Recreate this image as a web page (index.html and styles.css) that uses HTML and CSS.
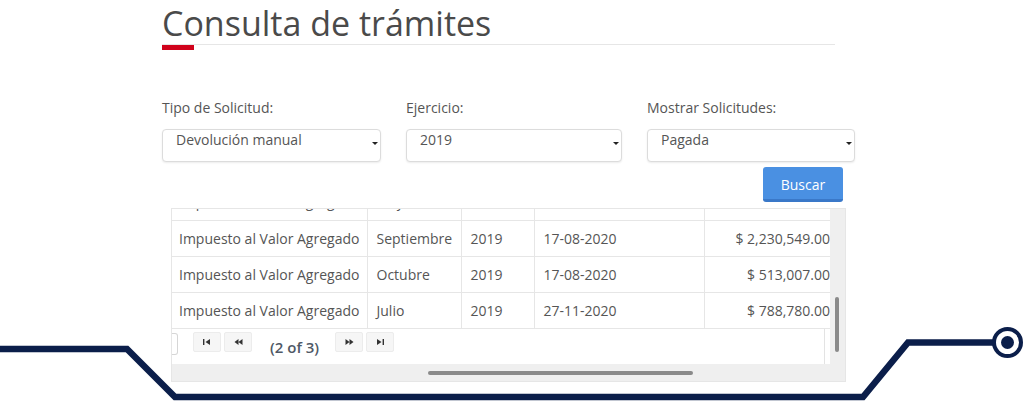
FILE: index.html
```html
<!DOCTYPE html>
<html lang="es">
<head>
<meta charset="utf-8">
<title>Consulta de trámites</title>
<link rel="stylesheet" href="styles.css">
</head>
<body>
<main class="page">
  <header class="page-head">
    <h1 class="title">Consulta de trámites</h1>
    <div class="accent"></div>
  </header>

  <section class="filters">
    <div class="field">
      <label class="field-label">Tipo de Solicitud:</label>
      <div class="select select-1"><span class="select-value">Devolución manual</span><i class="caret"></i></div>
    </div>
    <div class="field">
      <label class="field-label">Ejercicio:</label>
      <div class="select select-2"><span class="select-value">2019</span><i class="caret"></i></div>
    </div>
    <div class="field">
      <label class="field-label">Mostrar Solicitudes:</label>
      <div class="select select-3"><span class="select-value">Pagada</span><i class="caret"></i></div>
    </div>
  </section>

  <div class="actions"><button class="btn-search" type="button">Buscar</button></div>

  <div class="grid-box">
    <div class="viewport">
      <table class="data">
        <colgroup>
          <col class="c1"><col class="c2"><col class="c3"><col class="c4"><col class="c5">
        </colgroup>
        <tbody>
          <tr><td>Impuesto al Valor Agregado</td><td>Mayo</td><td>2019</td><td>17-08-2020</td><td class="num">$ 1,204,318.00</td></tr>
          <tr><td>Impuesto al Valor Agregado</td><td>Septiembre</td><td>2019</td><td>17-08-2020</td><td class="num">$ 2,230,549.00</td></tr>
          <tr><td>Impuesto al Valor Agregado</td><td>Octubre</td><td>2019</td><td>17-08-2020</td><td class="num">$ 513,007.00</td></tr>
          <tr><td>Impuesto al Valor Agregado</td><td>Julio</td><td>2019</td><td>27-11-2020</td><td class="num">$ 788,780.00</td></tr>
        </tbody>
      </table>
      <div class="pager">
        <span class="pg-size"></span>
        <button class="pg-btn pg-first" type="button" aria-label="Primera">
          <svg width="8" height="6" viewBox="0 0 8 6"><rect x="0" y="0" width="1.4" height="6" fill="#333"/><path d="M7 0 L2.5 3 L7 6 Z" fill="#333"/></svg>
        </button>
        <button class="pg-btn" type="button" aria-label="Anterior">
          <svg width="9" height="6" viewBox="0 0 9 6"><path d="M4.5 0 L0.5 3 L4.5 6 Z M8.5 0 L4.5 3 L8.5 6 Z" fill="#333"/></svg>
        </button>
        <span class="pg-text">(2 of 3)</span>
        <button class="pg-btn" type="button" aria-label="Siguiente">
          <svg width="9" height="6" viewBox="0 0 9 6"><path d="M0.5 0 L4.5 3 L0.5 6 Z M4.5 0 L8.5 3 L4.5 6 Z" fill="#333"/></svg>
        </button>
        <button class="pg-btn" type="button" aria-label="Última">
          <svg width="8" height="6" viewBox="0 0 8 6"><path d="M1 0 L5.5 3 L1 6 Z" fill="#333"/><rect x="6.6" y="0" width="1.4" height="6" fill="#333"/></svg>
        </button>
      </div>
    </div>
    <div class="vscroll"><div class="vthumb"></div></div>
    <div class="hscroll"><div class="hthumb"></div></div>
    <div class="corner"></div>
  </div>
</main>

<svg class="deco" width="1024" height="401" viewBox="0 0 1024 401" aria-hidden="true">
  <polyline points="-5,349 127,349 175,397 863,397 908,342.5 993,342.5" fill="none" stroke="#0b1e4a" stroke-width="6.5" stroke-linejoin="miter"/>
  <circle cx="1007.5" cy="342.5" r="13.5" fill="#fff" stroke="#0b1e4a" stroke-width="4"/>
  <circle cx="1007.5" cy="342.5" r="6.5" fill="#0b1e4a"/>
</svg>
</body>
</html>
```

FILE: styles.css
```css
* { box-sizing: border-box; }

html, body {
  margin: 0;
  padding: 0;
  background: #ffffff;
}

body {
  position: relative;
  width: 1024px;
  height: 401px;
  overflow: hidden;
  font-family: "Open Sans", "Liberation Sans", sans-serif;
  font-size: 14px;
  color: #555555;
}

.page {
  width: 693px;
  margin-left: 162px;
}

/* ---------- heading ---------- */
.page-head {
  display: flex;
  flex-direction: column;
}

.title {
  margin: 0;
  padding: 3px 0 1px 0;
  font-size: 34px;
  font-weight: 400;
  line-height: 40px;
  color: #4a4a4a;
  border-bottom: 1px solid #e6e6e6;
  width: 673px;
}

.accent {
  width: 32px;
  height: 5px;
  background: #d0021b;
}

/* ---------- filters ---------- */
.filters {
  display: grid;
  grid-template-columns: 219px 216px 208px;
  column-gap: 25px;
  margin-top: 48px;
}

.field {
  display: flex;
  flex-direction: column;
  gap: 11px;
}

.field-label {
  line-height: 20px;
  color: #555555;
}

.select {
  display: flex;
  justify-content: space-between;
  align-items: flex-start;
  height: 33px;
  padding: 0 2px 0 13px;
  border: 1px solid #dcdcdc;
  border-radius: 4px;
  box-shadow: 0 1px 2px rgba(0, 0, 0, 0.08);
  background: #fff;
}

.select-value {
  line-height: 20px;
  color: #555555;
}

.caret {
  width: 0;
  height: 0;
  margin-top: 12px;
  border-left: 3px solid transparent;
  border-right: 3px solid transparent;
  border-top: 3px solid #222;
}

/* ---------- action ---------- */
.actions {
  display: flex;
  justify-content: flex-end;
  padding-right: 12px;
  margin-top: 5px;
}

.btn-search {
  width: 80px;
  height: 35px;
  border: 0;
  border-bottom: 3px solid #3a78c8;
  border-radius: 3px;
  background: #4a90e2;
  color: #ffffff;
  font-family: "Open Sans", "Liberation Sans", sans-serif;
  font-size: 14px;
  padding: 2px 0 0 0;
}

/* ---------- data grid ---------- */
.grid-box {
  display: grid;
  grid-template-columns: 658px 15px;
  grid-template-rows: 155px 17px;
  width: 675px;
  margin-left: 9px;
  margin-top: 6px;
  border: 1px solid #e6e6e6;
  background: #fff;
}

.viewport {
  overflow: hidden;
  background: #fff;
}

.data {
  border-collapse: collapse;
  table-layout: fixed;
  width: 666px;
  margin-top: -25px;
}

.c1 { width: 195px; }
.c2 { width: 94px; }
.c3 { width: 73px; }
.c4 { width: 170px; }
.c5 { width: 134px; }

.data td {
  padding: 8px 9px 7px 9px;
  line-height: 20px;
  height: 36px;
  border-bottom: 1px solid #e6e6e6;
  border-left: 1px solid #e6e6e6;
  white-space: nowrap;
  color: #555555;
}

.data td:first-child {
  border-left: 0;
  padding-left: 7px;
}

.data td.num {
  text-align: right;
  padding-right: 8px;
}

.pager {
  display: flex;
  align-items: flex-start;
  width: 653px;
  height: 36px;
  padding-top: 3px;
  border: 1px solid #e3e3e3;
  border-left: 0;
  border-top: 0;
  background: #fff;
}

.pg-size {
  width: 6px;
  height: 22px;
  margin-top: 1px;
  border: 1px solid #d6d6d6;
  border-left: 0;
  border-radius: 0 3px 3px 0;
}

.pg-btn {
  display: flex;
  align-items: center;
  justify-content: center;
  width: 28px;
  height: 20px;
  padding: 0;
  border: 1px solid #ececec;
  border-radius: 2px;
  background: #f6f6f6;
}

.pg-first { margin-left: 15px; }
.pg-btn + .pg-btn { margin-left: 3px; }

.pg-text {
  margin: 5px 16px 0 18px;
  font-size: 15px;
  line-height: 20px;
  font-weight: 600;
  color: #4f5966;
}

.vscroll {
  background: #efefef;
  padding: 88px 0 0 5px;
}

.vthumb {
  width: 4px;
  height: 55px;
  background: #8a8a8a;
  border-radius: 2px;
}

.hscroll {
  background: #efefef;
  padding: 7px 0 0 256px;
}

.hthumb {
  width: 265px;
  height: 4px;
  background: #8a8a8a;
  border-radius: 2px;
}

.corner {
  background: #efefef;
}

/* ---------- decorative circuit line ---------- */
.deco {
  position: absolute;
  left: 0;
  top: 0;
  pointer-events: none;
}
```
